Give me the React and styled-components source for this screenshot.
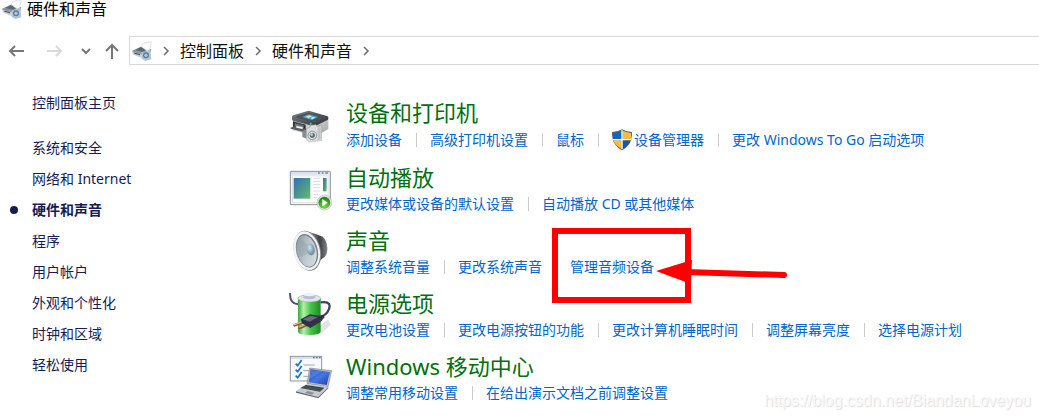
import styled, { createGlobalStyle } from "styled-components";

const GlobalStyle = createGlobalStyle`
    * {
        box-sizing: border-box;
    }
    body {
        margin: 0;
        background-color: #fff;
        font-family: "Noto Sans", "Noto Sans CJK SC", sans-serif;
        font-size: 14px;
        color: #000;
    }
    a {
        color: inherit;
        text-decoration: none;
    }
    svg {
        display: block;
        flex-shrink: 0;
    }
`

const Janela = styled.div`
    position: relative;
    min-height: 100vh;
`

const TitleBar = styled.header`
    display: flex;
    align-items: center;
    gap: 5px;
    height: 18px;
    padding-left: 2px;
    h1 {
        margin: 0;
        font-size: 16px;
        font-weight: 400;
        line-height: 18px;
    }
`

const Toolbar = styled.div`
    display: flex;
    align-items: center;
    margin-top: 18px;
    padding-left: 8px;
`

const NavButton = styled.button`
    display: flex;
    align-items: center;
    justify-content: center;
    width: ${({ $width }) => $width || 16}px;
    height: 28px;
    margin-right: ${({ $gap }) => $gap || 0}px;
    padding: 0;
    border: none;
    background: none;
    color: #777;
    &:disabled {
        color: #d9d9d9;
    }
`

const Address = styled.nav`
    display: flex;
    flex: 1;
    align-items: center;
    height: 29px;
    padding-left: 2px;
    border: 1px solid #d9d9d9;
    border-right: none;
    font-size: 16px;
    line-height: 24px;
    color: #111;
`

const Chevron = styled.svg`
    width: 8px;
    height: 10px;
    margin: 0 10px;
`

const Content = styled.div`
    display: flex;
    padding-top: 28px;
`

const Sidebar = styled.nav`
    width: 288px;
    flex-shrink: 0;
    color: #151c55;
    ul {
        display: flex;
        flex-direction: column;
        gap: 11px;
        margin: 0;
        padding: 0 0 0 32px;
        list-style: none;
    }
`

const SideItem = styled.li`
    position: relative;
    height: 20px;
    line-height: 20px;
    font-weight: ${({ $active }) => ($active ? 700 : 400)};
    margin-bottom: ${({ $home }) => ($home ? 14 : 0)}px;
    &::before {
        content: "";
        display: ${({ $active }) => ($active ? "block" : "none")};
        position: absolute;
        left: -22px;
        top: 6px;
        width: 8px;
        height: 8px;
        border-radius: 50%;
        background-color: #151c55;
    }
`

const Categories = styled.main`
    display: flex;
    flex-direction: column;
    flex: 1;
    gap: 13px;
    padding-top: 7px;
`

const Category = styled.section`
    display: flex;
    gap: 14px;
    h2 {
        margin: 0 0 4px;
        font-size: 22px;
        font-weight: 400;
        line-height: 24px;
        color: #00700e;
    }
`

const CategoryIcon = styled.svg`
    width: 44px;
    height: 46px;
`

const Tasks = styled.ul`
    display: flex;
    align-items: center;
    margin: 0;
    padding: 0;
    list-style: none;
    line-height: 22px;
    color: #0066cc;
`

const Task = styled.li`
    display: flex;
    align-items: center;
    position: relative;
    white-space: nowrap;
    & + &::before {
        content: "";
        width: 1px;
        height: 14px;
        margin: 0 13px 0 14px;
        background-color: #ccc;
    }
    a {
        display: flex;
        align-items: center;
        gap: 2px;
        position: relative;
    }
`

const Mark = styled.span`
    position: absolute;
    left: -18px;
    top: -28px;
    width: 139px;
    height: 75px;
    border: 6px solid #f00;
    pointer-events: none;
`

const Arrow = styled.svg`
    position: absolute;
    left: 98px;
    top: 22px;
    width: 136px;
    height: 30px;
`

const Watermark = styled.div`
    position: absolute;
    right: 8px;
    bottom: 8px;
    font-family: "Liberation Sans", sans-serif;
    font-size: 16px;
    line-height: 20px;
    color: #f8f8f8;
    text-shadow: 1px 1px 1px #ddd;
`

function DeviceIcon() {
    return (
        <svg width="20" height="20" viewBox="396 120 60 60" aria-hidden="true">
            <path d="M397 149l25-12 32 8-4 13-24 4-29-8z" fill="#8b959f" />
            <path d="M405 147l17-8 22 5-14 8z" fill="#5b6874" />
            <path d="M398 154l26 4 2 13-10-3-18-8z" fill="#c9ced3" />
            <path d="M403 155l17 4v4l-17-5z" fill="#3f4a55" />
            <path d="M424 137l4-10 26-5-5 26-8 2z" fill="#fafbfd" stroke="#c3c8ce" strokeWidth="1.5" />
            <path d="M425 154l26-6 3 27-18 5-11-7z" fill="#b3c4d4" />
            <circle cx="438" cy="163" r="9" fill="#5a7b97" />
            <circle cx="438" cy="163" r="5" fill="#a5cbe8" />
        </svg>
    );
}

function PrinterIcon() {
    return (
        <CategoryIcon viewBox="24 15 132 138" aria-hidden="true">
            <defs>
                <linearGradient id="prBody" x1="0" y1="0" x2="1" y2="1">
                    <stop offset="0" stopColor="#f2f2f2" />
                    <stop offset="1" stopColor="#9b9ea1" />
                </linearGradient>
                <linearGradient id="prLid" x1="0" y1="0" x2="1" y2="1">
                    <stop offset="0" stopColor="#7b8085" />
                    <stop offset="1" stopColor="#2c3034" />
                </linearGradient>
            </defs>
            <path d="M38 67L92 79l53-9v32l-34 20-74-16z" fill="url(#prBody)" />
            <path d="M36 66q0-3 4-5l43-13q3-1 6 0l52 15q5 2 4 6l-1 5-38 19q-3 1-7 0L39 77q-3-1-3-4z" fill="url(#prLid)" />
            <path d="M46 66l39-13 49 14-32 15z" fill="#4b5258" />
            <path d="M66 66l21-8 28 8-19 9z" fill="#4fa2dc" />
            <path d="M76 66l11-5 9 3-10 5z" fill="#c8eeae" />
            <path d="M98 66l8 1-8 5-6-2z" fill="#e3f2fb" />
            <path d="M39 79l38 10v17l-38-9z" fill="#2c3033" />
            <path d="M44 84l27 7v9l-27-6z" fill="#6f767b" />
            <path d="M31 98l15-5 32 9-7 9-39-10z" fill="#5a5f64" />
            <path d="M49 92l19 5v5l-19-4z" fill="#f4f4f4" />
            <path d="M67 108l13-4v27l-13-5z" fill="#858b90" />
            <path d="M80 101l9-3 4-7 15-2 4 6 12-3 1 44-34 5-11-5z" fill="#dcdedf" stroke="#9da1a4" strokeWidth="1.5" />
            <path d="M113 97l9-2v38l-9 2z" fill="#c1c4c6" />
            <circle cx="97" cy="121" r="14" fill="#8f9498" />
            <circle cx="97" cy="121" r="11" fill="#eceeef" />
            <circle cx="97" cy="121" r="8" fill="#626b76" />
            <circle cx="95" cy="119" r="4" fill="#b6cbdd" />
            <circle cx="92" cy="86" r="3" fill="#60e048" />
        </CategoryIcon>
    );
}

function AutoplayIcon() {
    return (
        <CategoryIcon viewBox="24 210 132 138" aria-hidden="true">
            <defs>
                <linearGradient id="apPic" x1="0" y1="0" x2="1" y2="1">
                    <stop offset="0" stopColor="#3470b4" />
                    <stop offset="0.6" stopColor="#4f9c88" />
                    <stop offset="1" stopColor="#6bb86c" />
                </linearGradient>
                <radialGradient id="apPlay" cx="0.5" cy="0.8" r="0.8">
                    <stop offset="0" stopColor="#7fdc46" />
                    <stop offset="1" stopColor="#147a1b" />
                </radialGradient>
            </defs>
            <rect x="31" y="229" width="120" height="100" rx="2" fill="#f2f5f7" stroke="#8c9196" strokeWidth="3" />
            <rect x="33" y="231" width="116" height="8" fill="#dae2e9" />
            <path d="M114 234h6M125 234h6M136 234h8" stroke="#52606d" strokeWidth="3" />
            <rect x="38" y="243" width="106" height="80" fill="#fff" stroke="#c7d0d8" strokeWidth="1.5" />
            <rect x="41" y="249" width="50" height="62" fill="url(#apPic)" />
            <path d="M100 250h21M100 259h21M100 269h21M100 278h21M100 288h21M100 298h14M100 308h12" stroke="#c4c8cc" strokeWidth="2" />
            <rect x="129" y="249" width="11" height="40" fill="url(#apPic)" />
            <circle cx="133" cy="323" r="22" fill="#f0f0f0" stroke="#969b96" strokeWidth="1.5" />
            <circle cx="133" cy="323" r="18" fill="url(#apPlay)" />
            <path d="M127 312l16 11-16 11z" fill="#fff" />
        </CategoryIcon>
    );
}

function SpeakerIcon() {
    return (
        <CategoryIcon viewBox="24 18 132 138" aria-hidden="true">
            <defs>
                <linearGradient id="spBack" x1="0" y1="0" x2="1" y2="0">
                    <stop offset="0" stopColor="#8c8f92" />
                    <stop offset="0.6" stopColor="#3f4245" />
                    <stop offset="1" stopColor="#84878a" />
                </linearGradient>
                <linearGradient id="spCone" x1="0" y1="0" x2="1" y2="1">
                    <stop offset="0" stopColor="#83919b" />
                    <stop offset="0.5" stopColor="#bcc6cc" />
                    <stop offset="1" stopColor="#dfe3e6" />
                </linearGradient>
                <radialGradient id="spCap" cx="0.4" cy="0.35" r="0.7">
                    <stop offset="0" stopColor="#d2e7f2" />
                    <stop offset="1" stopColor="#587e96" />
                </radialGradient>
            </defs>
            <path d="M86 30q22 5 42 14 13 10 14 34t-14 31q-14 10-30 30z" fill="url(#spBack)" />
            <ellipse cx="82" cy="86" rx="40" ry="61" transform="rotate(-14 82 86)" fill="#85888b" />
            <ellipse cx="80" cy="86" rx="39" ry="59" transform="rotate(-14 80 86)" fill="#f2f3f4" />
            <ellipse cx="81" cy="86" rx="32" ry="51" transform="rotate(-14 81 86)" fill="#757d83" />
            <ellipse cx="80" cy="87" rx="29" ry="48" transform="rotate(-14 80 87)" fill="url(#spCone)" />
            <path d="M58 48l31 26-8 23-29 10q-9-36 6-59z" fill="#96a4ae" opacity="0.5" />
            <ellipse cx="92" cy="82" rx="12" ry="18" transform="rotate(-10 92 82)" fill="url(#spCap)" />
        </CategoryIcon>
    );
}

function PowerIcon() {
    return (
        <CategoryIcon viewBox="24 207 132 138" aria-hidden="true">
            <defs>
                <linearGradient id="pwCell" x1="0" y1="0" x2="1" y2="0">
                    <stop offset="0" stopColor="#3da544" />
                    <stop offset="0.25" stopColor="#b4f0aa" />
                    <stop offset="0.55" stopColor="#45c746" />
                    <stop offset="1" stopColor="#1d8a27" />
                </linearGradient>
            </defs>
            <path d="M122 337l30-29-8-16-24 20z" fill="#e3e3e3" />
            <path d="M30 215q0 30 24 32" fill="none" stroke="#52546b" strokeWidth="6" strokeLinecap="round" />
            <path d="M54 229v101q2 9 34 9t34-9V229z" fill="url(#pwCell)" />
            <ellipse cx="88" cy="229" rx="34" ry="11" fill="#e2e6e9" stroke="#8c989a" strokeWidth="1.5" />
            <path d="M70 228v-9q18-9 36 0v9q-18 8-36 0z" fill="#b7bed6" />
            <ellipse cx="88" cy="218" rx="17" ry="5" fill="#eff1fa" />
            <path d="M122 241q26-4 27 11-1 20-25 33" fill="none" stroke="#414359" strokeWidth="7" />
            <path d="M67 301l-23 9M82 308l-24 10" stroke="#8e562d" strokeWidth="8" strokeLinecap="round" />
            <path d="M66 299l-22 9M81 306l-22 9" stroke="#e6b780" strokeWidth="4" strokeLinecap="round" />
            <path d="M62 292l28-15 26 4 14-3 4 8-13 14-30 18-25-14z" fill="#303144" />
            <path d="M68 292l24-11 21 5-24 13z" fill="#686b7d" />
        </CategoryIcon>
    );
}

function MobilityIcon() {
    return (
        <CategoryIcon viewBox="24 27 132 138" aria-hidden="true">
            <defs>
                <linearGradient id="mbScreen" x1="0" y1="0" x2="1" y2="1">
                    <stop offset="0" stopColor="#1747ba" />
                    <stop offset="0.5" stopColor="#4677e2" />
                    <stop offset="1" stopColor="#1c3cac" />
                </linearGradient>
            </defs>
            <rect x="31" y="34" width="94" height="74" fill="#f7f9fb" stroke="#8c969f" strokeWidth="3" />
            <rect x="33" y="36" width="90" height="6" fill="#d8e1e9" />
            <path d="M99 38h5M108 38h5M117 38h5" stroke="#52606d" strokeWidth="3" />
            <path d="M70 60h34M70 77h20M70 94h14" stroke="#9ca5ad" strokeWidth="3" />
            <path d="M47 56l6 6 12-17M47 74l6 6 12-17M47 92l6 6 12-17" fill="none" stroke="#1c73bd" strokeWidth="5" />
            <path d="M89 69l66 8-11 48-63-9z" fill="#b8bec6" stroke="#666e79" strokeWidth="1.5" />
            <path d="M92 73l58 8-10 39-54-8z" fill="url(#mbScreen)" />
            <path d="M93 74l34 4-40 25z" fill="#87aaf0" opacity="0.35" />
            <path d="M79 117l66 9-31 30-66-17z" fill="#c6cbd0" />
            <path d="M48 139l66 17 31-30v4l-30 30-67-17z" fill="#646a71" />
            <path d="M78 120l55 8-13 12-59-11z" fill="#383d44" />
            <path d="M73 124l55 9M67 128l55 9" stroke="#8c9299" strokeWidth="1" />
            <path d="M83 138l20 5-7 6-21-5z" fill="#8d9399" />
        </CategoryIcon>
    );
}

function ShieldIcon() {
    return (
        <svg width="20" height="24" viewBox="212 95 60 72" aria-hidden="true">
            <path d="M242 99q14 8 30 8 2 38-30 55-32-17-30-55 16 0 30-8z" fill="#666" />
            <path d="M240 103v25h-25q-1-9 0-18 14-1 25-7z" fill="#0a68c9" />
            <path d="M244 103q12 6 25 7 1 9 0 18h-25z" fill="#fdbb3c" />
            <path d="M216 132h24v25q-19-10-24-25z" fill="#fdbb3c" />
            <path d="M268 132h-24v25q19-10 24-25z" fill="#0a58b8" />
            <path d="M242 102v56M214 130h56" stroke="#fff" strokeWidth="4" />
        </svg>
    );
}

function Separator() {
    return (
        <Chevron viewBox="0 0 8 10" aria-hidden="true">
            <path d="M2 1l4 4-4 4" fill="none" stroke="#6d6d6d" strokeWidth="1.5" />
        </Chevron>
    );
}

const menu = ["控制面板主页", "系统和安全", "网络和 Internet", "硬件和声音", "程序", "用户帐户", "外观和个性化", "时钟和区域", "轻松使用"]

const categories = [
    {
        title: "设备和打印机",
        Icon: PrinterIcon,
        tasks: ["添加设备", "高级打印机设置", "鼠标", "设备管理器", "更改 Windows To Go 启动选项"],
        admin: "设备管理器",
    },
    {
        title: "自动播放",
        Icon: AutoplayIcon,
        tasks: ["更改媒体或设备的默认设置", "自动播放 CD 或其他媒体"],
    },
    {
        title: "声音",
        Icon: SpeakerIcon,
        tasks: ["调整系统音量", "更改系统声音", "管理音频设备"],
        marked: "管理音频设备",
    },
    {
        title: "电源选项",
        Icon: PowerIcon,
        tasks: ["更改电池设置", "更改电源按钮的功能", "更改计算机睡眠时间", "调整屏幕亮度", "选择电源计划"],
    },
    {
        title: "Windows 移动中心",
        Icon: MobilityIcon,
        tasks: ["调整常用移动设置", "在给出演示文档之前调整设置"],
    },
]

export default function App() {
    return (
        <Janela lang="zh-CN">
            <GlobalStyle />
            <TitleBar>
                <DeviceIcon />
                <h1>硬件和声音</h1>
            </TitleBar>
            <Toolbar>
                <NavButton aria-label="后退" $gap={23}>
                    <svg width="16" height="14" viewBox="0 0 16 14">
                        <path d="M16 7H2M7 2L2 7l5 5" fill="none" stroke="currentColor" strokeWidth="2" />
                    </svg>
                </NavButton>
                <NavButton aria-label="前进" disabled $gap={18}>
                    <svg width="16" height="14" viewBox="0 0 16 14">
                        <path d="M0 7h14M9 2l5 5-5 5" fill="none" stroke="currentColor" strokeWidth="2" />
                    </svg>
                </NavButton>
                <NavButton aria-label="最近浏览的位置" $width={10} $gap={14}>
                    <svg width="10" height="8" viewBox="0 0 10 8">
                        <path d="M1 2l4 4 4-4" fill="none" stroke="currentColor" strokeWidth="2" />
                    </svg>
                </NavButton>
                <NavButton aria-label="向上" $width={14} $gap={10}>
                    <svg width="14" height="16" viewBox="0 0 14 16">
                        <path d="M7 16V2M1 8l6-6 6 6" fill="none" stroke="currentColor" strokeWidth="2" />
                    </svg>
                </NavButton>
                <Address aria-label="地址">
                    <DeviceIcon />
                    <Separator />
                    <a href="#">控制面板</a>
                    <Separator />
                    <a href="#">硬件和声音</a>
                    <Separator />
                </Address>
            </Toolbar>
            <Content>
                <Sidebar>
                    <ul>
                        {menu.map((item, i) => (
                            <SideItem key={item} $home={i === 0} $active={item === "硬件和声音"}>
                                <a href="#">{item}</a>
                            </SideItem>
                        ))}
                    </ul>
                </Sidebar>
                <Categories>
                    {categories.map(({ title, Icon, tasks, admin, marked }) => (
                        <Category key={title}>
                            <Icon />
                            <div>
                                <h2><a href="#">{title}</a></h2>
                                <Tasks>
                                    {tasks.map((task) => (
                                        <Task key={task}>
                                            <a href="#">
                                                {task === admin && <ShieldIcon />}
                                                {task}
                                                {task === marked && (
                                                    <Mark>
                                                        <Arrow viewBox="0 0 136 30" aria-hidden="true">
                                                            <path d="M30 16l98 3" stroke="#f00" strokeWidth="6" strokeLinecap="round" />
                                                            <path d="M0 15L36 4l-1 24z" fill="#f00" />
                                                        </Arrow>
                                                    </Mark>
                                                )}
                                            </a>
                                        </Task>
                                    ))}
                                </Tasks>
                            </div>
                        </Category>
                    ))}
                </Categories>
            </Content>
            <Watermark>https://blog.csdn.net/BiandanLoveyou</Watermark>
        </Janela>
    );
}
